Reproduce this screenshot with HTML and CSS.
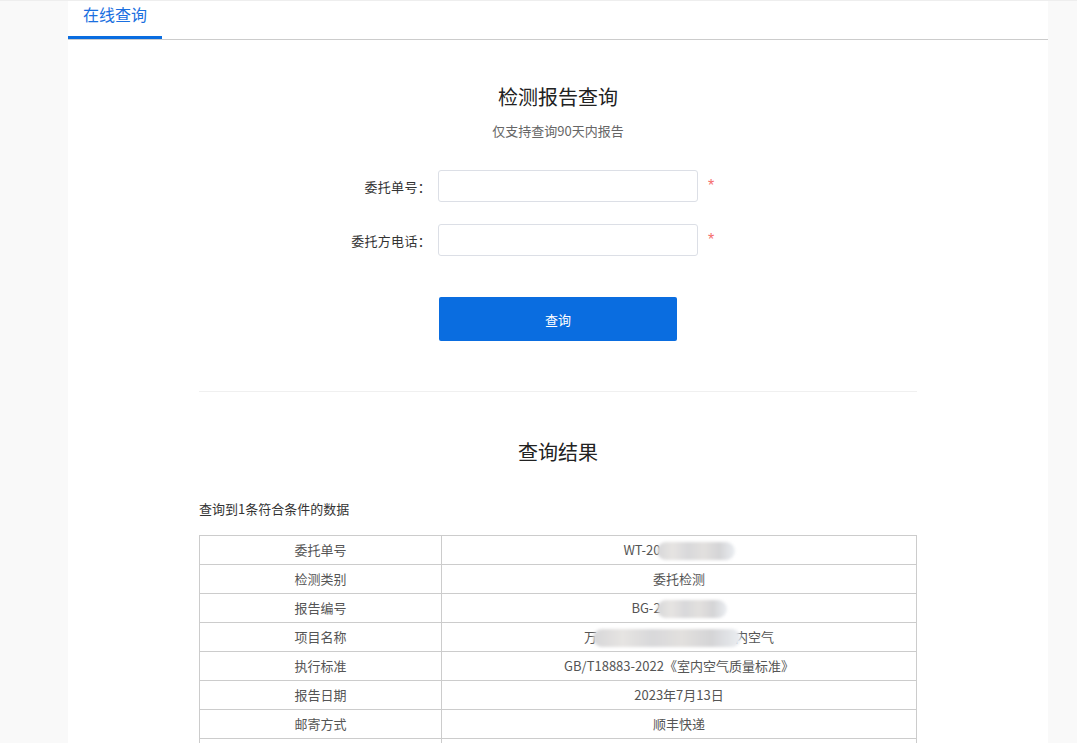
FILE: index.html
```html
<!DOCTYPE html>
<html lang="zh-CN">
<head>
<meta charset="utf-8">
<title>在线查询</title>
<link rel="stylesheet" href="styles.css">
</head>
<body>
<div class="page">
  <div class="panel">
    <div class="tabs">
      <div class="tab active">在线查询</div>
    </div>
    <h1 class="title">检测报告查询</h1>
    <p class="subtitle">仅支持查询90天内报告</p>
    <div class="form">
      <div class="row">
        <label class="label">委托单号：</label>
        <input class="input" type="text">
        <span class="star">*</span>
      </div>
      <div class="row">
        <label class="label">委托方电话：</label>
        <input class="input" type="text">
        <span class="star">*</span>
      </div>
      <div class="btn-row">
        <button class="btn">查询</button>
      </div>
    </div>
    <div class="divider"></div>
    <h2 class="result-title">查询结果</h2>
    <div class="result">
      <p class="count">查询到1条符合条件的数据</p>
      <table class="table">
        <tr><td class="k">委托单号</td><td class="v">WT-20<span class="blur b1"></span></td></tr>
        <tr><td class="k">检测类别</td><td class="v">委托检测</td></tr>
        <tr><td class="k">报告编号</td><td class="v">BG-2<span class="blur b2"></span></td></tr>
        <tr><td class="k">项目名称</td><td class="v">万<span class="blur b3"></span>内空气</td></tr>
        <tr><td class="k">执行标准</td><td class="v">GB/T18883-2022《室内空气质量标准》</td></tr>
        <tr><td class="k">报告日期</td><td class="v">2023年7月13日</td></tr>
        <tr><td class="k">邮寄方式</td><td class="v">顺丰快递</td></tr>
        <tr><td class="k"></td><td class="v"></td></tr>
      </table>
    </div>
  </div>
</div>
</body>
</html>
```

FILE: styles.css
```css
* { box-sizing: border-box; }
html, body { margin: 0; padding: 0; }
body {
  background: #f9f9f9;
  font-family: "Noto Sans CJK SC", "Noto Sans", "Liberation Sans", sans-serif;
  color: #333;
  overflow: hidden;
}
.page {
  border-top: 1px solid #eeeeee;
  height: 743px;
}
.panel {
  margin-left: 68px;
  width: 980px;
  background: #fff;
  min-height: 742px;
}
.tabs {
  display: flex;
  height: 39px;
  border-bottom: 1px solid #cccccc;
}
.tab {
  width: 94px;
  height: 38px;
  font-size: 16px;
  line-height: 26px;
  text-align: center;
  color: #1a6fe0;
  border-bottom: 3px solid #0a6de0;
}
.title {
  margin: 43px 0 0;
  font-size: 20px;
  font-weight: normal;
  line-height: 28px;
  text-align: center;
  color: #222;
}
.subtitle {
  margin: 10px 0 0;
  font-size: 13px;
  line-height: 20px;
  text-align: center;
  color: #666;
}
.form {
  margin-top: 29px;
  margin-left: 263px;
}
.row {
  display: flex;
  align-items: center;
  height: 32px;
  margin-bottom: 22px;
}
.label {
  width: 100px;
  margin-right: 7px;
  text-align: right;
  font-size: 13px;
  color: #333;
  letter-spacing: 0.3px;
}
.input {
  width: 260px;
  height: 32px;
  border: 1px solid #dcdfe6;
  border-radius: 3px;
  outline: none;
  background: #fff;
}
.star {
  margin-left: 10px;
  color: #f56c6c;
  font-family: "Liberation Sans", sans-serif;
  font-size: 16px;
  line-height: 16px;
  padding-top: 0;
}
.btn-row {
  padding-top: 19px;
  padding-left: 108px;
}
.btn {
  width: 238px;
  height: 44px;
  border: none;
  border-radius: 2px;
  background: #0a6de0;
  color: #fff;
  font-family: inherit;
  font-size: 13px;
  display: block;
}
.divider {
  width: 718px;
  margin: 50px auto 0;
  height: 1px;
  background: #f0f0f0;
}
.result-title {
  margin: 46px 0 0;
  font-size: 20px;
  font-weight: normal;
  line-height: 28px;
  text-align: center;
  color: #222;
}
.result {
  width: 718px;
  margin: 0 auto;
}
.count {
  margin: 33px 0 16px;
  font-size: 13px;
  line-height: 20px;
  color: #333;
}
.table {
  width: 718px;
  border-collapse: collapse;
  font-size: 13px;
  color: #555;
}
.table td {
  border: 1px solid #cccccc;
  height: 29px;
  padding: 0;
  text-align: center;
  line-height: 20px;
}
.table td.k { width: 242px; }
.blur {
  display: inline-block;
  vertical-align: middle;
  height: 18px;
  border-radius: 9px;
  background: linear-gradient(90deg, #d6d6d8, #e6e4e2 20%, #d8d8da 40%, #e2e0de 60%, #d4d4d6 80%, #ebeef2);
  filter: blur(1.5px);
}
.b1 { width: 78px; margin-left: -4px; }
.b2 { width: 70px; margin-left: -4px; }
.b3 { width: 148px; margin-left: -4px; margin-right: -6px; }
```
